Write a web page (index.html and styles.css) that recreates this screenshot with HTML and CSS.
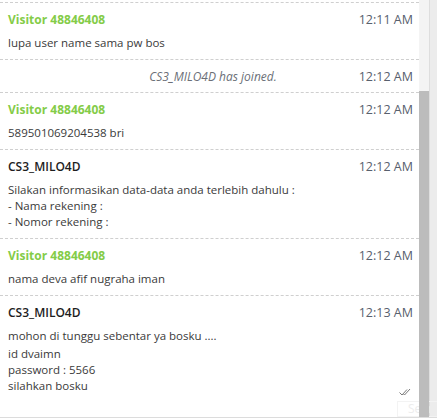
FILE: index.html
```html
<!DOCTYPE html>
<html>
<head>
<meta charset="utf-8">
<link rel="stylesheet" href="styles.css">
</head>
<body>
<div class="frame">
  <div class="chat">
    <div class="msg">
      <div class="head"><span class="name visitor">Visitor 48846408</span><span class="time">12:11 AM</span></div>
      <div class="body"><p>lupa user name sama pw bos</p></div>
    </div>
    <div class="msg system">
      <span class="sys-text">CS3_MILO4D has joined.</span><span class="time">12:12 AM</span>
    </div>
    <div class="msg">
      <div class="head"><span class="name visitor">Visitor 48846408</span><span class="time">12:12 AM</span></div>
      <div class="body"><p>589501069204538 bri</p></div>
    </div>
    <div class="msg">
      <div class="head"><span class="name agent">CS3_MILO4D</span><span class="time">12:12 AM</span></div>
      <div class="body"><p>Silakan informasikan data-data anda terlebih dahulu :<br>- Nama rekening :<br>- Nomor rekening :</p></div>
    </div>
    <div class="msg">
      <div class="head"><span class="name visitor">Visitor 48846408</span><span class="time">12:12 AM</span></div>
      <div class="body"><p>nama deva afif nugraha iman</p></div>
    </div>
    <div class="msg last">
      <div class="head"><span class="name agent">CS3_MILO4D</span><span class="time">12:13 AM</span></div>
      <div class="body">
        <p class="first">mohon di tunggu sebentar ya bosku ....</p>
        <p>id dvaimn<br>password : 5566<br>silahkan bosku</p>
      </div>
      <div class="status">
        <svg class="check" width="12" height="8" viewBox="0 0 12 8"><path d="M0.5 4.5 L3 7 L8 1.5 M4.5 6 L5.5 7 L11 1" fill="none" stroke="#7a7a7a" stroke-width="1"/></svg>
      </div>
    </div>
  </div>
  <div class="seen">Seen</div>
  <div class="track">
    <div class="track-space"></div>
    <div class="thumb"></div>
  </div>
  <div class="edge"></div>
</div>
</body>
</html>
```

FILE: styles.css
```css
html, body {
  margin: 0;
  padding: 0;
  background: #ffffff;
}
body {
  width: 437px;
  height: 419px;
  overflow: hidden;
  font-family: "Open Sans", "Noto Sans", sans-serif;
}
.frame {
  position: relative;
  display: flex;
  height: 417px;
  border-bottom: 1px solid #dcdcdc;
}
.chat {
  width: 419px;
  padding-top: 2px;
  overflow: hidden;
}
.msg {
  border-top: 1px dashed #cfcfcf;
  padding: 6px 6px 8px 8px;
}
.head {
  display: flex;
  justify-content: space-between;
  align-items: center;
  height: 20px;
}
.name {
  font-size: 12px;
  font-weight: 700;
}
.visitor {
  color: #84cc48;
}
.agent {
  color: #1e1e1e;
  font-weight: 600;
}
.time {
  font-size: 12.5px;
  color: #58606d;
}
.body {
  margin-top: 6px;
  font-size: 11.5px;
  line-height: 16px;
  color: #3a3a3a;
}
.body p {
  margin: 0;
}
.body p.first {
  margin-bottom: 2px;
}
.system {
  display: flex;
  justify-content: flex-end;
  align-items: center;
  height: 20px;
  gap: 82px;
  padding-bottom: 6px;
}
.sys-text {
  font-size: 12px;
  font-style: italic;
  color: #6b6f77;
}
.status {
  display: flex;
  justify-content: flex-end;
  padding-right: 2px;
  margin-top: -6px;
}
.check {
  display: block;
}
.seen {
  position: absolute;
  left: 397px;
  top: 401px;
  width: 30px;
  height: 14px;
  border: 1px solid #f3f3f3;
  color: #ededed;
  font-size: 12px;
  line-height: 14px;
  padding-left: 10px;
}
.track {
  width: 10px;
  background: #f4f4f4;
  display: flex;
  flex-direction: column;
  position: relative;
  z-index: 1;
}
.track-space {
  height: 91px;
}
.thumb {
  flex: 1;
  background: #bcbcbc;
}
.edge {
  flex: 1;
  background: #ececec;
  border-left: 1px solid #dedede;
}
```
